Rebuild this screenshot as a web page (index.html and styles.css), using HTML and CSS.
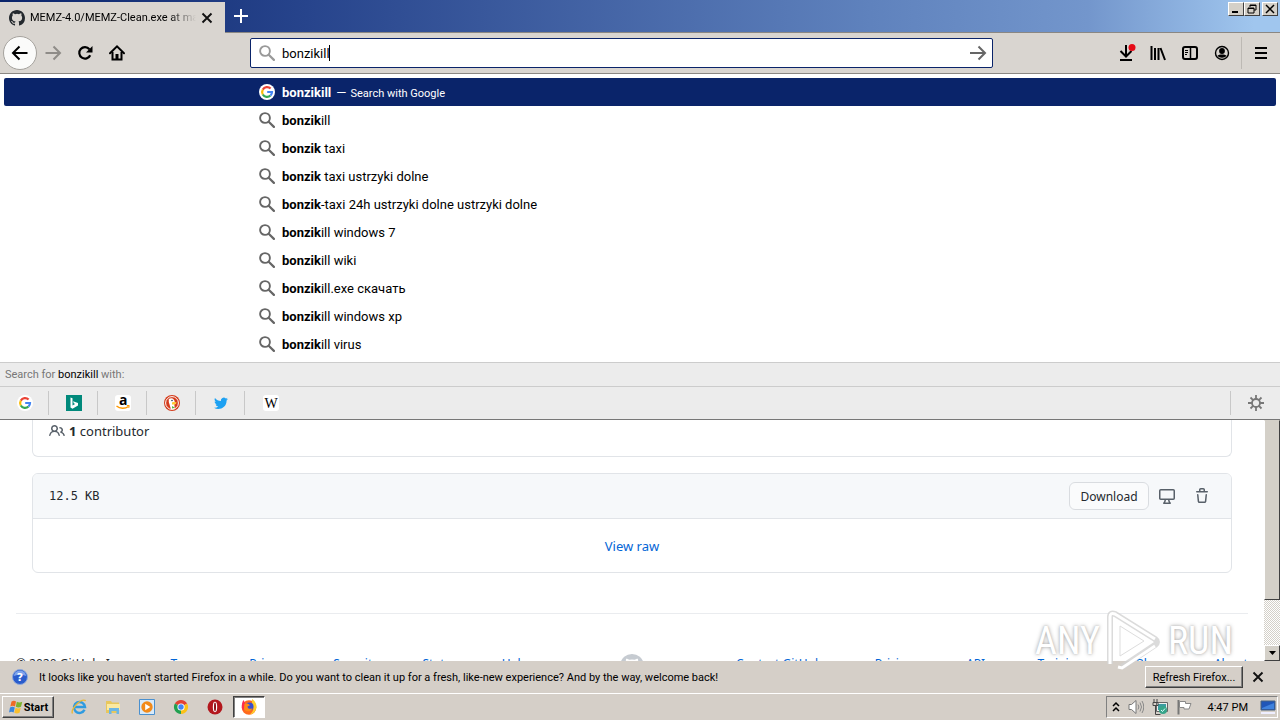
FILE: index.html
```
<!DOCTYPE html>
<html lang="en">
<head>
    <meta charset="UTF-8">
    <meta name="viewport" content="width=device-width, initial-scale=1.0">
    <title>MEMZ-4.0/MEMZ-Clean.exe at master</title>
    <link rel="stylesheet" href="styles.css">
</head>
<body>
    <!-- Shared symbols -->
    <svg class="defs" aria-hidden="true">
        <symbol id="search" viewBox="0 0 16 16">
            <circle cx="6" cy="6" r="4.9" fill="none" stroke="currentColor" stroke-width="1.9"/>
            <path d="M9.7 9.7l5.2 5.2" stroke="currentColor" stroke-width="2.2" stroke-linecap="round"/>
        </symbol>
        <symbol id="google" viewBox="0 0 16 16">
            <circle cx="8" cy="8" r="8" fill="#fff"/>
            <g fill="none" stroke-width="2.2">
                <path d="M11.600 4.600A4.900 4.900 0 0 0 3.800 5.600" stroke="#ea4335"/>
                <path d="M3.800 5.600a4.900 4.900 0 0 0 0 4.900" stroke="#fbbc05"/>
                <path d="M3.800 10.500a4.900 4.900 0 0 0 7.700 1" stroke="#34a853"/>
                <path d="M8.200 8h4.800a4.900 4.900 0 0 1-1.500 3.500" stroke="#4285f4"/>
            </g>
        </symbol>
    </svg>

    <header class="tabstrip">
        <div class="tab">
            <svg class="icon" viewBox="0 0 16 16"><path fill="#24292e" d="M8 0C3.580 0 0 3.580 0 8c0 3.540 2.290 6.530 5.470 7.590.4.070.550-.170.550-.380v-1.490c-2.010.370-2.530-.490-2.690-.940-.090-.230-.480-.940-.820-1.130-.280-.150-.680-.520-.010-.530.630-.010 1.080.580 1.230.820.720 1.210 1.870.870 2.330.660.070-.520.280-.870.510-1.070-1.780-.200-3.640-.890-3.640-3.950 0-.870.310-1.590.820-2.150-.080-.200-.360-1.020.080-2.120 0 0 .670-.210 2.200.820a7.600 7.600 0 0 1 4 0c1.530-1.040 2.200-.820 2.200-.820.440 1.100.160 1.920.080 2.120.510.560.820 1.270.820 2.150 0 3.070-1.870 3.750-3.650 3.950.290.250.540.730.540 1.480v2.200c0 .210.150.460.550.380A8 8 0 0 0 16 8c0-4.420-3.580-8-8-8z"/></svg>
            <span class="tab-title">MEMZ-4.0/MEMZ-Clean.exe at master</span>
            <button class="tab-close" aria-label="Close tab"><svg viewBox="0 0 12 12"><path d="M1.500 1.500l9 9M10.500 1.500l-9 9" stroke="#111" stroke-width="1.900"/></svg></button>
        </div>
        <button class="new-tab" aria-label="New tab"><svg viewBox="0 0 16 16"><path d="M8 1v14M1 8h14" stroke="#fff" stroke-width="2"/></svg></button>
        <div class="window-buttons">
            <button aria-label="Minimize"><svg viewBox="0 0 12 10"><path d="M2 8h6" stroke="#000" stroke-width="2"/></svg></button>
            <button aria-label="Restore"><svg viewBox="0 0 12 10"><path d="M4 3V1h6v5H8M4 1.500h6M2 4h6v5H2zM2 4.500h6" fill="none" stroke="#000"/></svg></button>
            <button class="close" aria-label="Close"><svg viewBox="0 0 12 10"><path d="M2 1l8 8M10 1l-8 8" stroke="#000" stroke-width="1.500"/></svg></button>
        </div>
    </header>

    <nav class="toolbar">
        <button class="tool back" aria-label="Back"><svg viewBox="0 0 16 16"><path d="M15.500 8H1.500M7.500 1.500L1 8l6.500 6.500" fill="none" stroke="#000" stroke-width="2"/></svg></button>
        <button class="tool" aria-label="Forward"><svg viewBox="0 0 16 16"><path d="M.5 8h14M8.500 1.500L15 8l-6.500 6.500" fill="none" stroke="#8f8c88" stroke-width="2"/></svg></button>
        <button class="tool" aria-label="Reload"><svg viewBox="0 0 16 16"><path d="M13.200 10.200a5.700 5.700 0 1 1-.8-5.900" fill="none" stroke="#000" stroke-width="2.200"/><path d="M15.500 1v6.500H9z"/></svg></button>
        <button class="tool" aria-label="Home"><svg viewBox="0 0 16 16"><path d="M1 8.200L8 1.400l7 6.800" fill="none" stroke="#000" stroke-width="2" stroke-linecap="round"/><path d="M3.500 7v7.600h9V7" fill="none" stroke="#000" stroke-width="2"/><path d="M6.500 9h3v6h-3z"/></svg></button>

        <div class="urlbar">
            <svg class="icon dim" viewBox="0 0 16 16"><use href="#search"/></svg>
            <input type="text" aria-label="Search or enter address" value="bonzikill">
            <span class="caret"></span>
            <button class="go" aria-label="Go"><svg viewBox="0 0 16 16"><path d="M0 8h15M8.500 1.500L15 8l-6.500 6.500" fill="none" stroke="#666" stroke-width="2"/></svg></button>
        </div>

        <button class="tool" aria-label="Downloads"><svg viewBox="0 0 16 16"><path d="M8 0v11M2.500 6L8 11.500 13.500 6" fill="none" stroke="#000" stroke-width="2"/><path d="M2 15h12" stroke="#000" stroke-width="2"/><circle cx="14" cy="2.500" r="3.500" fill="#e60b17"/></svg></button>
        <button class="tool" aria-label="Library"><svg viewBox="0 0 16 16"><path d="M1.500 1v14M5 3v12M8.500 3v12M10.500 3l4.500 12" stroke="#000" stroke-width="2"/></svg></button>
        <button class="tool" aria-label="Sidebars"><svg viewBox="0 0 16 16"><rect x="1" y="2" width="14" height="12" rx="2" fill="none" stroke="#000" stroke-width="2"/><path d="M8.500 2v12" stroke="#000" stroke-width="1.500"/><path d="M3 5.500h3M3 7.500h3M3 9.500h2" stroke="#000"/></svg></button>
        <button class="tool" aria-label="Account"><svg viewBox="0 0 16 16"><circle cx="8" cy="8" r="6.500" fill="none" stroke="#000" stroke-width="1.400"/><circle cx="8" cy="6" r="2.900"/><path d="M3.500 10.500c1.500-1.500 7.500-1.500 9 0-1.500 3-7.500 3-9 0z"/></svg></button>
        <span class="separator"></span>
        <button class="tool" aria-label="Menu"><svg viewBox="0 0 16 16"><path d="M2 3h12M2 8h12M2 13h12" stroke="#000" stroke-width="2"/></svg></button>
    </nav>

    <section class="suggestions">
        <ul class="results">
            <li class="result selected"><svg class="icon"><use href="#google"/></svg><span><b>bonzikill</b></span><span class="dash">—</span><span class="action">Search with Google</span></li>
            <li class="result"><svg class="icon"><use href="#search"/></svg><span><b>bonzik</b>ill</span></li>
            <li class="result"><svg class="icon"><use href="#search"/></svg><span><b>bonzik</b> taxi</span></li>
            <li class="result"><svg class="icon"><use href="#search"/></svg><span><b>bonzik</b> taxi ustrzyki dolne</span></li>
            <li class="result"><svg class="icon"><use href="#search"/></svg><span><b>bonzik</b>-taxi 24h ustrzyki dolne ustrzyki dolne</span></li>
            <li class="result"><svg class="icon"><use href="#search"/></svg><span><b>bonzik</b>ill windows 7</span></li>
            <li class="result"><svg class="icon"><use href="#search"/></svg><span><b>bonzik</b>ill wiki</span></li>
            <li class="result"><svg class="icon"><use href="#search"/></svg><span><b>bonzik</b>ill.exe скачать</span></li>
            <li class="result"><svg class="icon"><use href="#search"/></svg><span><b>bonzik</b>ill windows xp</span></li>
            <li class="result"><svg class="icon"><use href="#search"/></svg><span><b>bonzik</b>ill virus</span></li>
        </ul>
        <div class="engines-title">Search for <span>bonzikill</span> with:</div>
        <div class="engines">
            <button class="engine" aria-label="Google"><svg class="icon"><use href="#google"/></svg></button>
            <button class="engine" aria-label="Bing"><svg class="icon" viewBox="0 0 16 16"><path fill="#00897b" d="M0 0h16v16H0z"/><path fill="#fff" d="M4.500 2.500l2 .7v7.200l2.600-1.500-1.300-.6L7 6.200l5 1.900v2.400l-5.500 3.200-2-1.200z"/></svg></button>
            <button class="engine" aria-label="Amazon"><svg class="icon" viewBox="0 0 16 16"><rect width="16" height="16" rx="3" fill="#fff"/><text class="amazon-a" x="4" y="10">a</text><path d="M1.500 11c3.500 3 8.500 3 12 .5" fill="none" stroke="#f90" stroke-width="1.400"/><path d="M11.800 10.500h2.400l-.4 2.400" fill="none" stroke="#f90"/></svg></button>
            <button class="engine" aria-label="DuckDuckGo"><svg class="icon" viewBox="0 0 16 16"><circle cx="8" cy="8" r="8" fill="#d43c1c"/><circle cx="8" cy="8" r="6.400" fill="none" stroke="#fff"/><path d="M4.800 4c3-2 6 0 6 3.500l1.500 1-2 .8.500 4.500c-1.500.8-3 .6-4 0L4.800 7z" fill="#fff"/><path d="M8 7.500c1.500-.8 3.500-.5 4.800 0L11 9.500H8z" fill="#fc3"/><circle cx="8" cy="5.500" r=".8" fill="#246"/><path d="M8 11l3 1.800-3 .7z" fill="#5b4"/></svg></button>
            <button class="engine" aria-label="Twitter"><svg class="icon" viewBox="0 0 16 16"><path fill="#1da1f2" d="M15 3.900c-.5.200-1 .4-1.600.4.600-.3 1-.9 1.200-1.500-.6.300-1.200.6-1.800.7a2.900 2.900 0 0 0-4.900 2.600C5.500 6 3.400 4.900 2 3.100c-.8 1.300-.4 3 .9 3.900-.500 0-.9-.2-1.300-.4 0 1.400 1 2.600 2.300 2.900-.4.100-.9.100-1.300 0 .4 1.200 1.400 2 2.700 2A5.800 5.800 0 0 1 1 12.700c4.600 2.900 12.600.5 12.600-7.300.5-.400 1-.900 1.400-1.500z"/></svg></button>
            <button class="engine" aria-label="Wikipedia"><svg class="icon" viewBox="0 0 16 16"><rect width="16" height="16" rx="3" fill="#fff"/><text class="wiki-w" x="8" y="13" text-anchor="middle">W</text></svg></button>
            <button class="engine settings" aria-label="Change search settings"><svg class="icon" viewBox="0 0 16 16"><circle cx="8" cy="8" r="4" fill="none" stroke="#777" stroke-width="1.800"/><path d="M8 0v4M8 12v4M0 8h4M12 8h4M2.500 2.500l2.600 2.600M10.900 10.900l2.600 2.600M13.500 2.500l-2.600 2.600M5.100 10.900l-2.600 2.600" stroke="#777" stroke-width="1.800"/></svg></button>
        </div>
    </section>

    <div class="viewport">
        <main class="page">
            <div class="contributors">
                <svg class="icon" viewBox="0 0 16 16"><path fill="#586069" fill-rule="evenodd" d="M5.500 3.500a2 2 0 100 4 2 2 0 000-4zM2 5.500a3.500 3.500 0 115.898 2.549 5.507 5.507 0 013.034 4.084.75.75 0 11-1.482.235 4.001 4.001 0 00-7.900 0 .75.75 0 01-1.482-.236A5.507 5.507 0 013.102 8.050 3.490 3.490 0 012 5.500zM11 4a.75.75 0 100 1.500 1.500 1.500 0 01.666 2.844.75.75 0 00-.416.672v.352a.75.75 0 00.574.730c1.200.289 2.162 1.200 2.522 2.372a.75.75 0 101.434-.440 5.010 5.010 0 00-2.560-3.012A3 3 0 0011 4z"/></svg>
                <span><b>1</b> contributor</span>
            </div>
            <div class="file">
                <div class="file-header">
                    <span class="file-size">12.5 KB</span>
                    <button class="download">Download</button>
                    <button class="file-action" aria-label="Open in desktop"><svg viewBox="0 0 16 16"><path fill="#586069" fill-rule="evenodd" d="M1.750 2.500h12.500a.25.25 0 01.25.25v7.500a.25.25 0 01-.25.25H1.750a.25.25 0 01-.25-.25v-7.500a.25.25 0 01.25-.25zM14.250 1H1.750A1.750 1.750 0 000 2.750v7.500C0 11.216.784 12 1.750 12h3.727c-.1 1.041-.520 1.872-1.292 2.757A.75.75 0 004.750 16h6.500a.75.75 0 00.565-1.243c-.772-.885-1.193-1.716-1.292-2.757h3.727A1.750 1.750 0 0016 10.250v-7.500A1.750 1.750 0 0014.250 1zM9.018 12H6.982a5.720 5.720 0 01-.765 2.500h3.566a5.720 5.720 0 01-.765-2.500z"/></svg></button>
                    <button class="file-action" aria-label="Delete file"><svg viewBox="0 0 16 16"><path fill="#586069" fill-rule="evenodd" d="M6.500 1.750a.25.25 0 01.25-.25h2.500a.25.25 0 01.25.25V3h-3V1.750zm4.500 0V3h2.250a.75.75 0 010 1.500H2.750a.75.75 0 010-1.500H5V1.750C5 .784 5.784 0 6.750 0h2.500C10.216 0 11 .784 11 1.750zM4.496 6.675a.75.75 0 10-1.492.150l.660 6.600A1.750 1.750 0 005.405 15h5.190c.900 0 1.652-.681 1.741-1.576l.660-6.600a.75.75 0 00-1.492-.149l-.660 6.600a.25.25 0 01-.249.225h-5.190a.25.25 0 01-.249-.225l-.660-6.600z"/></svg></button>
                </div>
                <div class="file-body"><a href="#">View raw</a></div>
            </div>
            <footer class="footer">
                <ul>
                    <li>© 2020 GitHub, Inc.</li>
                    <li><a href="#">Terms</a></li>
                    <li><a href="#">Privacy</a></li>
                    <li><a href="#">Security</a></li>
                    <li><a href="#">Status</a></li>
                    <li><a href="#">Help</a></li>
                </ul>
                <svg class="mark" viewBox="0 0 16 16"><path fill="#c6cbd1" d="M8 0a8 8 0 0 0-2.500 15.600V12A5 5 0 0 1 4 5.200c-.2-.8-.1-1.500.1-2.100 1 0 1.700.5 2.200.8a8 8 0 0 1 3.400 0c.5-.3 1.200-.8 2.200-.8.200.6.300 1.300.1 2.100a5 5 0 0 1-1.500 6.800v3.600A8 8 0 0 0 8 0z"/></svg>
                <ul>
                    <li><a href="#">Contact GitHub</a></li>
                    <li><a href="#">Pricing</a></li>
                    <li><a href="#">API</a></li>
                    <li><a href="#">Training</a></li>
                    <li><a href="#">Blog</a></li>
                    <li><a href="#">About</a></li>
                </ul>
            </footer>
        </main>
        <div class="scrollbar">
            <div class="thumb"></div>
            <div class="track"></div>
            <button class="scroll-down" aria-label="Scroll down"><svg viewBox="0 0 7 4"><path d="M0 0h7L3.500 4z"/></svg></button>
        </div>
    </div>

    <div class="notification">
        <svg class="icon" viewBox="0 0 16 16"><circle cx="8" cy="8" r="7.500" fill="#2a5ccc" stroke="#8fa9da"/><path d="M2 7a6 5.500 0 0 1 12 0q-6-3-12 0z" fill="#7fa4ec"/><text class="question" x="8" y="12" text-anchor="middle">?</text></svg>
        <p>It looks like you haven't started Firefox in a while. Do you want to clean it up for a fresh, like-new experience? And by the way, welcome back!</p>
        <button class="refresh">R<u>e</u>fresh Firefox...</button>
        <button class="dismiss" aria-label="Dismiss"><svg viewBox="0 0 12 12"><path d="M1.500 1.500l9 9M10.500 1.500l-9 9" stroke="#111" stroke-width="1.900"/></svg></button>
    </div>

    <div class="taskbar">
        <button class="start"><svg class="icon" viewBox="0 0 16 16"><path d="M3.500 2.500q2.500-1.500 4.500 0L7 7.500q-2.300-1.400-4.700 0z" fill="#ef6a24"/><path d="M8.800 2.800q2.500 1.500 5.500 0l-1.300 5q-2.500 1.500-5.200 0z" fill="#7db32c"/><path d="M2 8.500q2.500-1.400 4.800 0l-1.200 5q-2.300-1.500-4.600 0z" fill="#3a86dc"/><path d="M7.600 8.800q2.600 1.500 5.200 0l-1.300 5q-2.600 1.500-5.200 0z" fill="#fbc02d"/></svg>Start</button>
        <button class="task" aria-label="Internet Explorer"><svg class="icon" viewBox="0 0 16 16"><path d="M13.500 10.800A5.500 5.500 0 1 1 14 8H4" fill="none" stroke="#2e9be0" stroke-width="2.500"/><path d="M1.500 14.500C-.5 11 9-1 14.800 1.600" fill="none" stroke="#e9b838" stroke-width="1.400"/></svg></button>
        <button class="task" aria-label="Explorer"><svg class="icon" viewBox="0 0 16 16"><path d="M1 2h5l1 1.500h7V14H1z" fill="#e8c75c"/><path d="M2 5h13v6H2z" fill="#fbe9a0"/><path d="M4 9h10v6h-2.500v-3h-5v3H4z" fill="#6cb6e4"/></svg></button>
        <button class="task" aria-label="Media Player"><svg class="icon" viewBox="0 0 16 16"><path d="M.5.5h15v15H.5z" fill="#d8eafa" stroke="#4a90cf"/><circle cx="8" cy="8" r="5.700" fill="#f28a1a"/><path d="M6.200 4.800v6.400L11.300 8z" fill="#fff"/></svg></button>
        <button class="task" aria-label="Chrome"><svg class="icon" viewBox="0 0 16 16"><path d="M8 8L1.900 4.500A7 7 0 0 1 14.100 4.500z" fill="#e34133"/><path d="M8 8l6.100-3.500A7 7 0 0 1 8 15z" fill="#fbc116"/><path d="M8 8v7A7 7 0 0 1 1.900 4.500z" fill="#22a050"/><circle cx="8" cy="8" r="3.600" fill="#fff"/><circle cx="8" cy="8" r="2.700" fill="#4285f4"/></svg></button>
        <button class="task" aria-label="Opera"><svg class="icon" viewBox="0 0 16 16"><circle cx="8" cy="8" r="7.500" fill="#b3171d"/><ellipse cx="8" cy="8" rx="2.200" ry="5.200" fill="#fff"/><ellipse cx="8" cy="8" rx="1" ry="4.400" fill="#8b1116"/></svg></button>
        <button class="task active" aria-label="Firefox"><svg class="icon" viewBox="0 0 16 16"><circle cx="8" cy="8.500" r="7.300" fill="#ff6a1c"/><path d="M11 0c3 2 5 5 4.300 9-.6 3.500-3 6-6.500 6.500 4-3 4.500-7 2.200-9.500z" fill="#ffcf2e"/><path d="M1 9c-.5-3 0-6 1.500-8L4 4l-1.500 8z" fill="#ff2d4d"/><circle cx="8.500" cy="7.500" r="4" fill="#3a4fd0"/><path d="M3.500 5c2-.8 4-.4 5.500 1.200l-2.500 1.300c0 2.500 3 3 5 1.500-1 4-6.500 4.500-8.500 1z" fill="#ff8a16"/></svg></button>
        <div class="tray">
            <svg class="chevrons" viewBox="0 0 8 12"><path d="M1 5l3-3 3 3M1 10l3-3 3 3" fill="none" stroke="#000" stroke-width="1.500"/></svg>
            <svg class="icon" viewBox="0 0 16 16"><path d="M1 5.500h2.500L8 1.500v13l-4.500-4H1z" fill="#fff" stroke="#777"/><path d="M10 5.500q1.800 2.500 0 5M12 3.500q3 4.500 0 9M14 2q3.500 6 0 12" fill="none" stroke="#888"/></svg>
            <svg class="icon" viewBox="0 0 16 16"><path d="M4.500 3.500h11v9h-11z" fill="#eee" stroke="#666"/><path d="M6 5h8v6H6z" fill="#3b9ca0"/><path d="M2 0v3M5 0v3M1 3.500h5v3H1zM3.500 7v8.500h5" fill="none" stroke="#444"/><circle cx="11" cy="11" r="4" fill="#37a58a"/><path d="M9 11l1.500 1.500L13 9.500" fill="none" stroke="#dff"/></svg>
            <svg class="icon" viewBox="0 0 16 16"><path d="M2.500 1v14.500" stroke="#777" stroke-width="2"/><path d="M3.500 2.500h6v2h5.500l-2 5.500H8V8.500H3.500z" fill="#fff" stroke="#888"/></svg>
            <time>4:47 PM</time>
            <svg class="icon" viewBox="0 0 16 16"><path d="M1 2h14v9H1z" fill="#1f56b8" stroke="#49637f"/><path d="M2 9l12-5v6H2z" fill="#3f82dd"/><path d="M1 13h14v2H1z" fill="#eef"/></svg>
        </div>
    </div>

    <div class="watermark">
        <span>ANY</span>
        <svg viewBox="0 0 56 64"><path d="M4 55V8q0-5 5-3l40 25q4 3 0 6L16 58" fill="none" stroke="#d2d2d2" stroke-opacity=".8" stroke-width="6"/><path d="M4 55V8q0-5 5-3l40 25M12 58l4 1 33-22M14 17v30l24-15z" fill="none" stroke="#fff" stroke-width="3"/><path d="M14 17v30l24-15z" fill="none" stroke="#ddd"/></svg>
        <span>RUN</span>
    </div>
</body>
</html>
```
FILE: styles.css
```
* {
    box-sizing: border-box;
}

body {
    margin: 0;
    height: 100vh;
    display: flex;
    flex-direction: column;
    position: relative;
    overflow: hidden;
    font-family: Roboto, "Noto Sans", sans-serif;
    font-size: 11px;
    background: #fff;
    color: #000;
}

button {
    display: flex;
    align-items: center;
    justify-content: center;
    padding: 0;
    border: none;
    background: none;
    font: inherit;
    color: inherit;
}

ul {
    list-style: none;
    margin: 0;
    padding: 0;
}

a {
    color: #0366d6;
    text-decoration: none;
}

.defs {
    display: none;
}

.icon {
    width: 16px;
    height: 16px;
    flex-shrink: 0;
}

/* Tabs */
.tabstrip {
    height: 33px;
    flex-shrink: 0;
    display: flex;
    align-items: flex-start;
    background: linear-gradient(to right, #0a246a 0, #27448c 24%, #5f82bd 68%, #7396cc 85%, #a0c6ee 98%);
    border-bottom: 1px solid #8a8783;
}

.tab {
    width: 225px;
    height: 31px;
    margin: 2px 0 -1px;
    padding: 0 12px 0 9px;
    display: flex;
    align-items: center;
    gap: 5px;
    background: #d9d5d0;
}

.tab-title {
    flex: 1;
    min-width: 0;
    overflow: hidden;
    white-space: nowrap;
    mask-image: linear-gradient(to right, #000 84%, transparent);
}

.tab-close svg,
.dismiss svg {
    width: 12px;
    height: 12px;
}

.new-tab {
    width: 32px;
    height: 32px;
}

.new-tab svg {
    width: 16px;
    height: 16px;
}

.window-buttons {
    display: flex;
    margin: 2px 2px 0 auto;
}

.window-buttons button {
    width: 16px;
    height: 14px;
    background: #d4d0c8;
    border: 1px solid;
    border-color: #fff #404040 #404040 #fff;
}

.window-buttons svg {
    width: 12px;
    height: 10px;
}

.window-buttons .close {
    margin-left: 2px;
}

/* Navigation */
.toolbar {
    height: 41px;
    flex-shrink: 0;
    display: flex;
    align-items: center;
    padding: 0 3px;
    background: #d9d5d0;
    border-bottom: 1px solid #8a8783;
}

.tool {
    width: 32px;
    height: 32px;
    flex-shrink: 0;
}

.tool svg,
.go svg {
    width: 16px;
    height: 16px;
    overflow: visible;
}

.tool.back {
    width: 34px;
    height: 34px;
    background: #fbfbfa;
    border: 1px solid #a5a29d;
    border-radius: 50%;
}

.urlbar {
    flex: 1;
    height: 30px;
    margin: 0 117px;
    padding: 0 6px 0 8px;
    display: flex;
    align-items: center;
    background: #fff;
    border: 1px solid #0a246a;
    border-radius: 2px;
}

.urlbar input {
    width: 60px;
    margin-right: -6px;
    padding: 0 0 0 7px;
    border: none;
    outline: none;
    background: none;
    font: inherit;
    font-size: 13px;
}

.dim {
    color: #999;
}

.caret {
    width: 1px;
    height: 16px;
    background: #000;
}

.go {
    margin-left: auto;
}

.separator {
    width: 1px;
    height: 32px;
    margin: 0 3px;
    background: #bdb9b4;
}

/* Suggestions */
.results {
    padding: 4px;
}

.result {
    height: 28px;
    padding-left: 255px;
    display: flex;
    align-items: center;
    font-size: 13px;
    color: #000;
    border-radius: 2px;
}

.result .icon {
    margin-right: 7px;
    color: #666;
}

.result span {
    white-space: pre;
}

.result.selected {
    background: #0a246a;
    color: #fff;
}

.result .dash {
    margin: 0 4px 0 5px;
}

.result .action {
    padding-top: 2px;
    font-size: 11px;
}

.engines-title {
    height: 24px;
    padding-left: 5px;
    line-height: 24px;
    background: #ececec;
    border-top: 1px solid #ccc;
    color: #777;
}

.engines-title span {
    color: #000;
}

.engines {
    height: 34px;
    display: flex;
    align-items: center;
    background: #ececec;
    border-top: 1px solid #ccc;
    border-bottom: 1px solid #777;
}

.engine {
    width: 49px;
    height: 24px;
    padding-left: 2px;
    border-right: 1px solid #c8c8c8;
}

.engine:nth-last-child(2) {
    border-right: none;
}

.engine.settings {
    width: 50px;
    margin-left: auto;
    padding-left: 0;
    border-right: none;
    border-left: 1px solid #c8c8c8;
}

.amazon-a {
    font: bold 14px "Open Sans", sans-serif;
}

.wiki-w {
    font: 14px "Liberation Serif", serif;
}

/* Page content */
.viewport {
    flex: 1;
    min-height: 0;
    display: flex;
    overflow: hidden;
    font-family: "Noto Sans", sans-serif;
}

.page {
    flex: 1;
    padding: 0 16px;
    color: #24292e;
}

.contributors {
    height: 37px;
    margin: 0 16px 16px;
    padding: 0 16px 14px;
    display: flex;
    align-items: center;
    gap: 4px;
    font-size: 13px;
    border: 1px solid #e1e4e8;
    border-top: none;
    border-radius: 0 0 6px 6px;
}

.file {
    margin: 0 16px 40px;
    border: 1px solid #e1e4e8;
    border-radius: 6px;
    overflow: hidden;
}

.file-header {
    height: 45px;
    padding: 0 12px 0 16px;
    display: flex;
    align-items: center;
    background: #f6f8fa;
    border-bottom: 1px solid #e1e4e8;
}

.file-size {
    margin-right: auto;
    font-family: "DejaVu Sans Mono", monospace;
    font-size: 12px;
}

.download {
    width: 80px;
    height: 28px;
    font-size: 12px;
    background: #fafbfc;
    border: 1px solid #d9dce0;
    border-radius: 6px;
}

.file-action {
    width: 35px;
    height: 28px;
}

.file-action svg {
    width: 16px;
    height: 16px;
}

.file-body {
    height: 53px;
    display: flex;
    align-items: center;
    justify-content: center;
    font-size: 13px;
}

.footer {
    padding-top: 40px;
    display: flex;
    align-items: flex-start;
    justify-content: space-between;
    border-top: 1px solid #eaecef;
    font-size: 12px;
    line-height: 20px;
}

.footer ul {
    flex: 0 1 512px;
    display: flex;
    justify-content: space-between;
}

.mark {
    width: 24px;
    height: 24px;
}

.scrollbar {
    width: 16px;
    display: flex;
    flex-direction: column;
}

.thumb {
    flex: 4;
    background: #d4d0c8;
    border: 1px solid;
    border-color: #d4d0c8 #404040 #404040 #fff;
}

.track {
    flex: 1;
    background: repeating-conic-gradient(#fff 0 25%, #d4d0c8 0 50%) 0 0 / 2px 2px;
}

.scroll-down {
    height: 16px;
    background: #d4d0c8;
    border: 1px solid;
    border-color: #fff #404040 #404040 #fff;
}

.scroll-down svg {
    width: 7px;
    height: 4px;
}

/* Notification bar */
.notification {
    height: 32px;
    flex-shrink: 0;
    display: flex;
    align-items: center;
    padding: 0 16px 0 12px;
    background: #d5cfc8;
}

.notification p {
    margin: 0 auto 0 11px;
}

.question {
    font: bold 11px "DejaVu Sans", sans-serif;
    fill: #fff;
}

.refresh {
    display: block;
    width: 98px;
    height: 22px;
    margin-right: 9px;
    border: 1px solid;
    border-color: #fff #404040 #404040 #fff;
    box-shadow: inset -1px -1px #808080;
}

/* Taskbar */
.taskbar {
    height: 27px;
    flex-shrink: 0;
    display: flex;
    align-items: center;
    padding: 0 2px;
    background: #d5cfc8;
    border-top: 1px solid #fff;
}

.start {
    width: 52px;
    height: 22px;
    margin-right: 8px;
    font-weight: bold;
    border: 1px solid;
    border-color: #fff #404040 #404040 #fff;
    box-shadow: inset -1px -1px #808080;
}

.task {
    width: 34px;
    height: 22px;
}

.task.active {
    width: 32px;
    margin-left: 1px;
    background: #fff;
    border: 1px solid;
    border-color: #404040 #fff #fff #404040;
    box-shadow: inset 1px 1px #808080;
}

.tray {
    height: 22px;
    margin-left: auto;
    padding: 0 1px 0 5px;
    display: flex;
    align-items: center;
    gap: 8px;
    border: 1px solid;
    border-color: #808080 #fff #fff #808080;
}

.chevrons {
    width: 8px;
    height: 12px;
}

.tray time {
    padding: 0 4px 0 8px;
}

/* Overlay logo */
.watermark {
    position: absolute;
    right: 47px;
    bottom: 47px;
    display: flex;
    align-items: center;
    gap: 6px;
    font-family: "Roboto Condensed", "Liberation Sans Narrow", Roboto, sans-serif;
    font-size: 38px;
    color: #fff;
    text-shadow: 0 0 4px #aaa, 0 0 2px #ccc;
    pointer-events: none;
}

.watermark svg {
    width: 56px;
    height: 64px;
}
```
